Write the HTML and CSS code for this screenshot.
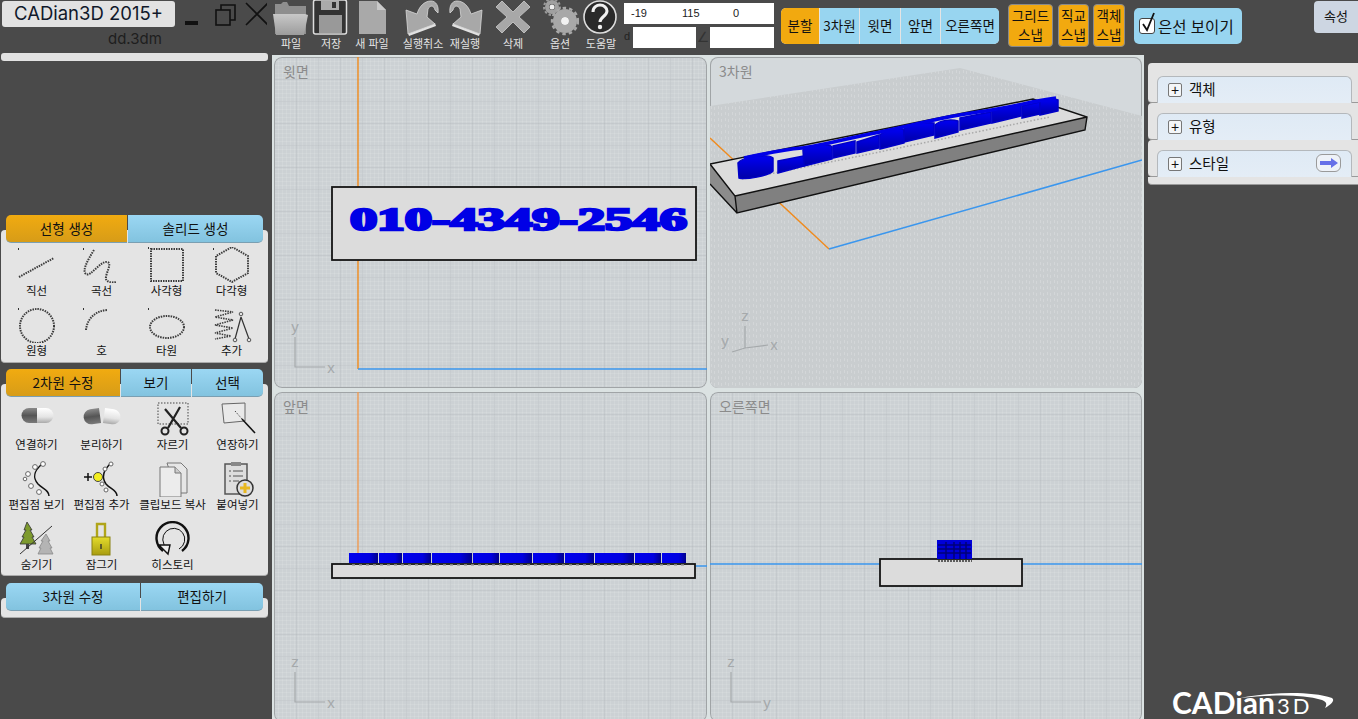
FILE: index.html
```html
<!DOCTYPE html>
<html lang="ko">
<head>
<meta charset="utf-8">
<title>CADian3D 2015+</title>
<link rel="stylesheet" href="styles.css">
</head>
<body>
<svg class="defs" width="0" height="0" aria-hidden="true">
  <defs>
    <linearGradient id="gPage" x1="0" y1="0" x2="0" y2="1"><stop offset="0" stop-color="#c8c8c8"/><stop offset="1" stop-color="#9c9c9c"/></linearGradient>
    <linearGradient id="gDark" x1="0" y1="0" x2="0" y2="1"><stop offset="0" stop-color="#8a8a8a"/><stop offset=".5" stop-color="#555"/><stop offset="1" stop-color="#7a7a7a"/></linearGradient>
    <linearGradient id="gLight" x1="0" y1="0" x2="0" y2="1"><stop offset="0" stop-color="#fff"/><stop offset=".6" stop-color="#e4e4e4"/><stop offset="1" stop-color="#aaa"/></linearGradient>
    <linearGradient id="gLock" x1="0" y1="0" x2="0" y2="1"><stop offset="0" stop-color="#e4dc2c"/><stop offset="1" stop-color="#a89c10"/></linearGradient>
    <linearGradient id="gBlue" x1="0" y1="0" x2="1" y2="0"><stop offset="0" stop-color="#0000ee"/><stop offset=".7" stop-color="#0000e0"/><stop offset="1" stop-color="#00008c"/></linearGradient>
    <linearGradient id="gWall" x1="0" y1="0" x2="0" y2="1"><stop offset="0" stop-color="#0000f4"/><stop offset=".45" stop-color="#0000d0"/><stop offset="1" stop-color="#0000a8"/></linearGradient>
    <pattern id="pFloor" width="7" height="6" patternUnits="userSpaceOnUse"><rect width="7" height="6" fill="#c9cdcf"/><rect x="1" y="1" width="1" height="3" fill="#d3d6d8"/><rect x="4" y="2" width="1" height="3" fill="#d3d6d8"/></pattern>
  </defs>
</svg>
<div class="app">
  <aside class="left">
    <div class="titlerow">
      <div class="appname">CADian3D 2015+</div>
      <svg class="winctl" width="90" height="26" viewBox="0 0 90 26">
        <rect x="8" y="20" width="13" height="4" fill="#111"/>
        <rect x="39" y="9" width="14" height="15" fill="none" stroke="#111" stroke-width="1.6"/>
        <path d="M44 9V4h14v15h-5" fill="none" stroke="#111" stroke-width="1.6"/>
        <path d="M69 2l22 22M91 2L69 24" stroke="#111" stroke-width="1.6"/>
      </svg>
    </div>
    <div class="filename">dd.3dm</div>
    <div class="progress"></div>

    <section class="group first">
      <div class="tabs">
        <div class="tab on t-a1">선형 생성</div>
        <div class="tab t-a2">솔리드 생성</div>
      </div>
      <div class="panel p1">
        <div class="cmds">
          <div class="cmd"><svg width="40" height="36" viewBox="0 0 40 36"><g class="dots"><path d="M2 30L37 11"/></g><rect class="tick" x="1" y="1" width="1" height="2"/></svg><span>직선</span></div>
          <div class="cmd"><svg width="40" height="36" viewBox="0 0 40 36"><g class="dots"><path d="M12 3C5 14 0 24 4 27c5 3 14-13 21-12 6 1-2 12-1 17 1 3 5 4 11 3"/></g><rect class="tick" x="1" y="1" width="1" height="2"/></svg><span>곡선</span></div>
          <div class="cmd"><svg width="40" height="36" viewBox="0 0 40 36"><g class="dots"><path d="M4 2h32v32H4z"/></g><rect class="tick" x="1" y="0" width="1" height="2"/></svg><span>사각형</span></div>
          <div class="cmd"><svg width="40" height="36" viewBox="0 0 40 36"><g class="dots"><path d="M20 0l16 9v17l-16 9-16-9V9z"/></g><rect class="tick" x="1" y="1" width="1" height="2"/></svg><span>다각형</span></div>
          <div class="cmd"><svg width="40" height="36" viewBox="0 0 40 36"><g class="dots"><circle cx="20" cy="19" r="17"/></g><rect class="tick" x="1" y="1" width="1" height="2"/></svg><span>원형</span></div>
          <div class="cmd"><svg width="40" height="36" viewBox="0 0 40 36"><g class="dots"><path d="M4 23C5 12 13 4 25 3"/></g><rect class="tick" x="1" y="1" width="1" height="2"/></svg><span>호</span></div>
          <div class="cmd"><svg width="40" height="36" viewBox="0 0 40 36"><g class="dots"><ellipse cx="20" cy="20" rx="17" ry="11"/></g><rect class="tick" x="1" y="1" width="1" height="2"/></svg><span>타원</span></div>
          <div class="cmd"><svg width="40" height="36" viewBox="0 0 40 36"><g class="dots thin"><path d="M3 3l18 2-18 5 18 3-18 5 18 3-18 5 16 3-16 3"/></g><path d="M29 10l-6 22M29 10l8 22" fill="none" stroke="#333" stroke-width="1.2"/><circle cx="29" cy="7" r="1.8" fill="#e4e4e4" stroke="#555"/><circle cx="23" cy="33" r="1.8" fill="#e4e4e4" stroke="#555"/><circle cx="37" cy="33" r="1.8" fill="#e4e4e4" stroke="#555"/></svg><span>추가</span></div>
        </div>
      </div>
    </section>

    <section class="group">
      <div class="tabs">
        <div class="tab on t-b1">2차원 수정</div>
        <div class="tab t-b2">보기</div>
        <div class="tab t-b3">선택</div>
      </div>
      <div class="panel p2">
        <div class="cmds cmds2">
          <div class="cmd"><svg width="40" height="36" viewBox="0 0 40 36"><path d="M12 7h8v15h-8a7.500 7.500 0 0 1 0-15z" fill="url(#gDark)"/><path d="M20 7h9a7.500 7.500 0 0 1 0 15h-9z" fill="url(#gLight)"/></svg><span>연결하기</span></div>
          <div class="cmd"><svg width="42" height="36" viewBox="0 0 42 36"><g transform="rotate(-8 12 15)"><path d="M10 8h9v15h-9a7.500 7.500 0 0 1 0-15z" fill="url(#gDark)"/></g><g transform="rotate(8 30 15)"><path d="M23 8h9a7.500 7.500 0 0 1 0 15h-9z" fill="url(#gLight)"/></g></svg><span>분리하기</span></div>
          <div class="cmd"><svg width="40" height="36" viewBox="0 0 40 36"><rect x="5" y="2" width="30" height="21" fill="none" stroke="#444" stroke-dasharray="1.500 1.500"/><path d="M12 8l16 19M27 6L15 27" stroke="#222" stroke-width="2.200"/><circle cx="12" cy="30" r="3.500" fill="none" stroke="#222" stroke-width="2"/><circle cx="31" cy="30" r="3.500" fill="none" stroke="#222" stroke-width="2"/></svg><span>자르기</span></div>
          <div class="cmd"><svg width="40" height="36" viewBox="0 0 40 36"><path d="M4 3l23-1v18L6 22z" fill="#e9e9e9" stroke="#666"/><path d="M17 10l7 8" stroke="#444" stroke-dasharray="1.500 1.500"/><path d="M24 18l13 14" stroke="#111" stroke-width="1.600"/></svg><span>연장하기</span></div>
          <div class="cmd"><svg width="40" height="36" viewBox="0 0 40 36"><path d="M25 3c-8 7-10 13-4 20 5 5 11 6 11 12" fill="none" stroke="#111" stroke-width="1.500"/><g fill="#fff" stroke="#666"><circle cx="26" cy="3" r="2.400"/><circle cx="18" cy="6" r="2.400"/><circle cx="11" cy="13" r="2.400"/><circle cx="8" cy="18" r="1.800"/><circle cx="14" cy="25" r="2.400"/><circle cx="22" cy="31" r="2.400"/></g></svg><span>편집점 보기</span></div>
          <div class="cmd"><svg width="40" height="36" viewBox="0 0 40 36"><path d="M28 3c-6 6-9 13-4 20 4 5 11 6 11 12" fill="none" stroke="#111" stroke-width="1.500"/><g fill="#fff" stroke="#666"><circle cx="29" cy="3" r="2"/><circle cx="23" cy="8" r="2"/><circle cx="20" cy="23" r="2"/><circle cx="24" cy="29" r="2"/></g><circle cx="16" cy="16" r="4.500" fill="#f3ee20" stroke="#444"/><path d="M2 16h8M6 12v8" stroke="#111" stroke-width="1.500"/></svg><span>편집점 추가</span></div>
          <div class="cmd"><svg width="40" height="36" viewBox="0 0 40 36"><path d="M14 2h14l6 6v24H24z" fill="#e6e6e6" stroke="#777"/><path d="M7 6h15l6 6v24H7z" fill="#ececec" stroke="#777"/><path d="M22 6v6h6" fill="#ccc" stroke="#777"/></svg><span>클립보드 복사</span></div>
          <div class="cmd"><svg width="40" height="36" viewBox="0 0 40 36"><rect x="7" y="3" width="22" height="30" fill="#ddd" stroke="#555" stroke-width="1.500"/><rect x="13" y="1" width="10" height="4" fill="#888"/><path d="M11 10h2M15 10h10M11 15h2M15 15h10M11 20h2M15 20h6" stroke="#555"/><circle cx="27" cy="27" r="8" fill="#ddd" stroke="#333" stroke-width="1.500"/><path d="M27 22v10M22 27h10" stroke="#e8b820" stroke-width="3"/></svg><span>붙여넣기</span></div>
          <div class="cmd"><svg width="40" height="36" viewBox="0 0 40 36"><path d="M10 1l5 8h-2l4 7h-2l4 7H3l4-7H5l4-7H7z" fill="#7d9a2e" stroke="#333" stroke-width=".8"/><rect x="9" y="23" width="3" height="5" fill="#444"/><path d="M29 13l4 7h-2l4 7h-2l3 6H21l3-6h-2l4-7h-2z" fill="#b4b4b4" stroke="#888" stroke-width=".8"/><path d="M3 33L35 5" stroke="#333"/></svg><span>숨기기</span></div>
          <div class="cmd"><svg width="40" height="36" viewBox="0 0 40 36"><path d="M15 17V3h8v14" fill="none" stroke="#b0a51a" stroke-width="2.400"/><rect x="10" y="16" width="18" height="18" fill="url(#gLock)" stroke="#8a8212"/><path d="M19 23v5" stroke="#333" stroke-width="1.400"/></svg><span>잠그기</span></div>
          <div class="cmd"><svg width="40" height="36" viewBox="0 0 40 36"><path d="M10 30A16 16 0 1 1 29 30" fill="none" stroke="#111" stroke-width="2.400"/><path d="M14 27a11 11 0 1 1 12 1" fill="none" stroke="#111" stroke-width="1"/><path d="M6 24l11 0-2 9z" fill="#eee" stroke="#111" stroke-width="1.400"/></svg><span>히스토리</span></div>
        </div>
      </div>
    </section>

    <section class="group">
      <div class="tabs">
        <div class="tab t-c1">3차원 수정</div>
        <div class="tab t-c2">편집하기</div>
      </div>
      <div class="panel p3"></div>
    </section>
  </aside>

  <div class="right">
    <header class="toolbar">
      <div class="tools">
        <div class="tool"><svg width="38" height="36" viewBox="0 0 38 36"><path d="M3 4h6l2-2h4l2 4h17v28H3z" fill="#8e8e8e"/><path d="M1 14h32l3 1-4 20H4z" fill="url(#gPage)"/></svg><span>파일</span></div>
        <div class="tool"><svg width="38" height="36" viewBox="0 0 38 36"><rect x="1.500" y="0" width="33" height="34" rx="2" fill="#333" stroke="#ddd" stroke-width="1.500"/><rect x="9" y="1" width="18" height="9" fill="#aaa"/><rect x="20" y="2" width="4" height="6" fill="#333"/><rect x="7" y="15" width="23" height="18" fill="#999"/></svg><span>저장</span></div>
        <div class="tool"><svg width="38" height="36" viewBox="0 0 38 36"><path d="M6 1h18l9 9v24H6z" fill="#a9a9a9"/><path d="M24 1v9h9z" fill="#c9c9c9"/></svg><span>새 파일</span></div>
        <div class="tool"><svg width="38" height="36" viewBox="0 0 38 36"><path d="M4 33l27-10 1 3-27 10z" fill="#e2e2e2"/><path d="M2 10l11 4C15 7 20 1 27 1c5 0 8 5 7 12l-3-3c-1-5-5-5-7-1l-1 8 8 7L4 34z" fill="#a8a8a8" stroke="#d8d8d8" stroke-width=".8"/></svg><span>실행취소</span></div>
        <div class="tool"><svg width="38" height="36" viewBox="0 0 38 36"><g transform="matrix(-1 0 0 1 38 0)"><path d="M4 33l27-10 1 3-27 10z" fill="#e2e2e2"/><path d="M2 10l11 4C15 7 20 1 27 1c5 0 8 5 7 12l-3-3c-1-5-5-5-7-1l-1 8 8 7L4 34z" fill="#a8a8a8" stroke="#d8d8d8" stroke-width=".8"/></g></svg><span>재실행</span></div>
        <div class="tool"><svg width="38" height="36" viewBox="0 0 38 36"><path d="M8 1l11 11L30 1l6 6-11 10 11 10-6 6-11-11L8 33l-6-6 11-10L2 7z" fill="#a8a8a8" stroke="#bcbcbc"/></svg><span>삭제</span></div>
        <div class="tool"><svg width="38" height="36" viewBox="0 0 38 36"><g fill="none"><circle cx="11" cy="7" r="8" stroke="#9a9a9a" stroke-width="2" stroke-dasharray="2.500 2"/><circle cx="11" cy="7" r="5" stroke="#a0a0a0" stroke-width="4"/><circle cx="24" cy="21" r="8" stroke="#a8a8a8" stroke-width="8"/><circle cx="24" cy="21" r="13" stroke="#a8a8a8" stroke-width="2.400" stroke-dasharray="3.500 3"/></g><circle cx="11" cy="7" r="2.500" fill="#eee"/><circle cx="24" cy="21" r="4" fill="#f2f2f2"/></svg><span>옵션</span></div>
        <div class="tool"><svg width="38" height="36" viewBox="0 0 38 36"><circle cx="18" cy="17" r="16" fill="#2a2a2a" stroke="#ddd" stroke-width="1.600"/><path d="M11 12c0-5 4-7 7-7 4 0 7 3 7 6 0 5-7 6-7 11" fill="none" stroke="#f0f0f0" stroke-width="3"/><circle cx="18" cy="27" r="2.200" fill="#f0f0f0"/></svg><span>도움말</span></div>
      </div>
      <div class="coords">
        <div class="coordtop"><span>-19</span><span>115</span><span>0</span></div>
        <div class="coordbot"><span class="mark">d</span><div class="cbox c1"></div><span class="mark ang">∠</span><div class="cbox c2"></div></div>
      </div>
      <div class="seg">
        <div class="s on s1">분할</div>
        <div class="s s2">3차원</div>
        <div class="s s3">윗면</div>
        <div class="s s4">앞면</div>
        <div class="s s5">오른쪽면</div>
      </div>
      <div class="snap sn1">그리드<br>스냅</div>
      <div class="snap sn2">직교<br>스냅</div>
      <div class="snap sn3">객체<br>스냅</div>
      <div class="hidden-line"><span class="check"><svg width="14" height="22" viewBox="0 0 14 22"><path d="M2 12l4 6 7-17" fill="none" stroke="#111" stroke-width="1.800"/></svg></span>은선 보이기</div>
      <div class="props">속성</div>
    </header>

    <main class="main">
      <div class="views">
        <div class="vp">
          <div class="vp-label">윗면</div>
          <svg class="scene" viewBox="0 0 433 331">
            <path class="ax-o" d="M84 0V312"/><path class="ax-b" d="M84 312H433"/>
            <rect class="slab" x="58" y="130" width="364" height="73"/>
            <text class="phone" x="76" y="173" textLength="337" lengthAdjust="spacingAndGlyphs">010-4349-2546</text>
            <path class="axis" d="M21 280V310H51"/><text class="axl" x="21" y="275">y</text><text class="axl" x="57" y="316">x</text>
          </svg>
        </div>
        <div class="vp">
          <div class="vp-label">3차원</div>
          <svg class="scene" viewBox="0 0 432 331">
            <path d="M0 49L250 11 432 59V331H0z" fill="url(#pFloor)"/>
            <path class="ax-o" d="M0 81L119 192"/><path class="ax-b" d="M119 192L432 103"/>
            <path d="M0 107L25 139 27 156 0 127z" fill="#8c8c8c"/>
            <path d="M25 139L377 60 375 73 27 156z" fill="#808080"/>
            <path d="M0 107L323 42 377 60 25 139z" fill="#dcdcdc"/>
            <path d="M0 107L323 42 377 60 375 73 27 156 25 139 0 107M25 139L377 60M0 127L27 156" fill="none" stroke="#111" stroke-width="1.400"/>
            <path d="M32 122C110 108 250 78 340 60" fill="none" stroke="#a8a8a8" stroke-width="1.500" stroke-dasharray="1.500 2"/>
            <g class="letters">
              <path d="M28 106c4-6 30-10 35-5v13c-4 5-28 9-34 7z"/>
              <path d="M68 104l26-5v10l-26 7z"/>
              <path d="M93 93c5-5 25-7 29-3v12l-28 7z"/>
              <path d="M123 89l22-5v12l-22 5z"/>
              <path d="M147 85l22-7v13l-22 5z"/>
              <path d="M170 78c5-5 20-8 24-5v13l-24 6z"/>
              <path d="M194 72c6-5 22-7 30-6v12l-30 7z"/>
              <path d="M225 68c5-5 16-6 23-4v11l-23 6z"/>
              <path d="M250 61l31-6v11l-31 7z"/>
              <path d="M282 54l29-6v11l-29 7z"/>
              <path d="M312 49l18-4v12l-18 4z"/>
              <path d="M330 45c3-3 14-4 18-2v11l-18 4z"/>
            </g>
            <path d="M34 101C70 93 80 92 92 91S130 83 170 75 230 60 268 55 320 44 346 41" fill="none" stroke="#0000e8" stroke-width="3.500"/>
            <path class="axis" d="M35 291V269M35 291L58 288M35 291L22 295"/><text class="axl" x="35" y="264">z</text><text class="axl" x="64" y="293">x</text><text class="axl" x="15" y="289">y</text>
          </svg>
        </div>
        <div class="vp">
          <div class="vp-label">앞면</div>
          <svg class="scene" viewBox="0 0 433 330">
            <path class="ax-o soft" d="M84 0V171"/><path class="ax-b" d="M422 174H433"/>
            <rect class="slab" x="58" y="172" width="363" height="14"/>
            <path d="M78 173H410" stroke="#999" stroke-width="1.500" stroke-dasharray="3 4" fill="none"/>
            <g class="front">
              <rect x="75" y="161" width="29" height="10"/><rect x="105" y="161" width="23" height="10"/><rect x="129" y="161" width="28" height="10"/><rect x="158" y="161" width="40" height="10"/><rect x="199" y="161" width="26" height="10"/><rect x="226" y="161" width="32" height="10"/><rect x="259" y="161" width="31" height="10"/><rect x="291" y="161" width="29" height="10"/><rect x="321" y="161" width="39" height="10"/><rect x="361" y="161" width="26" height="10"/><rect x="388" y="161" width="24" height="10"/>
            </g>
            <path class="axis" d="M21 280V310H51"/><text class="axl" x="21" y="275">z</text><text class="axl" x="57" y="316">x</text>
          </svg>
        </div>
        <div class="vp">
          <div class="vp-label">오른쪽면</div>
          <svg class="scene" viewBox="0 0 432 330">
            <path class="ax-b" d="M0 172H432"/>
            <rect class="slab" x="170" y="167" width="142" height="27"/>
            <rect x="227" y="148" width="35" height="19" fill="#0000d8"/>
            <path d="M236 150v17M244 150v17M250 150v17M256 150v17M228 153h33M228 157h33M228 161h33" stroke="#000078" stroke-width="1.500" fill="none"/>
            <path d="M228 169h34" stroke="#333" stroke-width="1.500" stroke-dasharray="2 1"/>
            <path class="axis" d="M21 280V310H51"/><text class="axl" x="21" y="275">z</text><text class="axl" x="57" y="316">y</text>
          </svg>
        </div>
      </div>
      <div class="side">
        <div class="acc acc-first"><div class="acc-h"><span class="plus">+</span>객체</div></div>
        <div class="acc"><div class="acc-h"><span class="plus">+</span>유형</div></div>
        <div class="acc"><div class="acc-h"><span class="plus">+</span>스타일<span class="go"><svg width="20" height="12" viewBox="0 0 20 12"><path d="M1 4h11V1l7 5-7 5V8H1z" fill="#6670e8"/></svg></span></div></div>
        <div class="acc acc-end"></div>
        <div class="logo">
          <svg class="swoosh" width="100" height="18" viewBox="0 0 100 18"><path d="M2 6C34 0 72-1 94 6c3 2 0 6-7 10 2-4 2-6-3-8C62 2 34 3 2 6z" fill="#fff"/></svg>
          <span class="lg1">CADian</span><span class="lg2">3D</span>
        </div>
      </div>
    </main>
  </div>
</div>
</body>
</html>
```
FILE: styles.css
```css
* { box-sizing: border-box; }
html, body { margin: 0; padding: 0; height: 100%; overflow: hidden; }
body {
  background: #4a4a4a;
  font-family: "Noto Sans CJK KR", "Noto Sans", "Liberation Sans", sans-serif;
  color: #111;
}
.defs { display: block; height: 0; }
.app { display: flex; width: 1358px; height: 719px; overflow: hidden; }

/* left column */
.left { width: 272px; flex: none; }
.titlerow { display: flex; padding: 1px 0 0 2px; height: 27px; }
.appname {
  width: 173px; height: 26px; background: #e2e2e2; border-radius: 3px;
  font: 18.5px/25px "Inter", "Liberation Sans", sans-serif; text-align: center; color: #10182a;
}
.winctl { margin-left: 2px; }
.filename { height: 26px; padding: 3px 0 0 108px; font: 15px/18px "Inter", "Liberation Sans", sans-serif; color: #1e1e1e; }
.progress { height: 8px; margin-left: 1px; width: 267px; background: #e2e2e2; border-radius: 3px; }

.group { margin-top: 6px; }
.group + .group + .group { margin-top: 7px; }
.group.first { margin-top: 154px; }
.tabs { display: flex; gap: 1px; margin: 0 9px 0 6px; position: relative; z-index: 1; height: 28px; }
.tab {
  background: linear-gradient(#9bd7f3, #82c3df);
  border-bottom: 1px solid #7a9fb2;
  font-size: 13.5px; line-height: 26px; text-align: center; color: #111;
}
.tab:first-child { border-radius: 5px 0 0 5px; }
.tab:last-child { border-radius: 0 5px 5px 0; }
.tab.on { background: linear-gradient(#f1ab10, #d79c18); }
.t-a1 { width: 121px; } .t-a2 { width: 135px; }
.t-b1 { width: 114px; } .t-b2 { width: 70px; } .t-b3 { width: 71px; }
.t-c1 { width: 134px; } .t-c2 { width: 122px; }

.panel { margin: -13px 0 0 1px; width: 267px; background: #e4e4e4; border-bottom: 1px solid #aaa; border-radius: 4px; padding: 15px 0 0 3px; }
.p1 { height: 133px; } .p2 { height: 192px; } .p3 { height: 20px; padding: 0; }
.cmds { display: grid; grid-template-columns: repeat(4, 65px); grid-auto-rows: 60px; }
.cmds2 { grid-template-columns: 65px 65px 77px 53px; }
.cmd { display: flex; flex-direction: column; align-items: center; }
.cmd svg { margin-top: 2px; display: block; flex: none; }
.cmd span { font-size: 11.5px; line-height: 14px; white-space: nowrap; color: #111; }
.dots path, .dots circle, .dots ellipse {
  fill: none; stroke: #3c3c3c; stroke-width: 2; stroke-dasharray: 1.5 1;
}
.dots.thin path { stroke-width: 1.6; }
.tick { fill: #333; }

/* right side */
.right { flex: 1; min-width: 0; display: flex; flex-direction: column; }
.toolbar { height: 55px; display: flex; align-items: flex-start; flex: none; }
.tools { display: flex; margin-left: -1px; }
.tool { width: 40px; height: 55px; display: flex; flex-direction: column; align-items: center; }
.tool svg { display: block; height: 36px; flex: none; }
.tool span { font-size: 11px; line-height: 14px; color: #e4e4e4; white-space: nowrap; }
.tool:nth-child(3) { margin-left: 1px; }
.tool:nth-child(4) { margin-left: 11px; }
.tool:nth-child(5) { margin-left: 2px; }
.tool:nth-child(6) { margin-left: 8px; }
.tool:nth-child(7) { margin-left: 7px; }
.tool:nth-child(8) { margin-left: 1px; }

.coords { width: 150px; margin: 3px 0 0 3px; flex: none; }
.coordtop { height: 21px; background: #fff; display: grid; grid-template-columns: 51px 51px 48px; padding-left: 7px; font: 11px/20px "Liberation Sans", sans-serif; color: #222; }
.coordbot { display: flex; margin-top: 3px; height: 21px; }
.mark { width: 9px; font: 11px/19px "Liberation Sans", sans-serif; color: #222; }
.mark.ang { width: 14px; text-align: center; color: #333; font: 14px/21px "DejaVu Sans", sans-serif; }
.cbox { background: #fff; height: 21px; }
.c1 { width: 63px; } .c2 { width: 64px; }

.seg { display: flex; width: 218px; height: 36px; margin: 8px 0 0 7px; flex: none; border-radius: 5px; overflow: hidden; gap: 1px; background: #e4e4e4; }
.s { background: #98d5f0; font-size: 13.5px; line-height: 34px; text-align: center; color: #111; white-space: nowrap; }
.s.on { background: #f2a90f; }
.s1 { width: 38px; } .s2 { width: 39px; } .s3 { width: 40px; } .s4 { width: 39px; } .s5 { flex: 1; }
.snap { height: 43px; margin-top: 4px; background: #f2a90f; border-radius: 4px; border: 1px solid #8a8a8a; font-size: 13.5px; line-height: 19px; text-align: center; padding-top: 1px; color: #111; flex: none; }
.sn1 { width: 45px; margin-left: 9px; }
.sn2 { width: 31px; margin-left: 5px; }
.sn3 { width: 32px; margin-left: 4px; }
.hidden-line { width: 108px; height: 36px; margin: 8px 0 0 9px; background: #98d5f0; border-radius: 5px; font-size: 15.5px; line-height: 35px; display: flex; align-items: center; color: #111; white-space: nowrap; flex: none; }
.check { width: 16px; height: 16px; margin: 0 3px 0 5px; background: #fff; border: 1px solid #444; border-radius: 3px; display: block; position: relative; flex: none; }
.check svg { position: absolute; left: 1px; top: -7px; }
.props { width: 44px; height: 32px; margin: 1px 0 0 72px; background: #cdd6e2; border-radius: 4px 0 0 4px; font-size: 13px; line-height: 30px; text-align: center; color: #111; flex: none; }

.main { display: flex; flex: 1; min-height: 0; }
.views {
  width: 872px; flex: none; padding: 2px; background: #dbe2e2;
  display: grid; grid-template-columns: 433px 432px; grid-template-rows: 331px 330px; column-gap: 3px; row-gap: 4px;
  overflow: hidden;
}
.vp {
  position: relative; border-radius: 8px; overflow: hidden;
  background-color: #ccd1d4;
  background-image:
    linear-gradient(rgba(180,185,189,.35) 1px, transparent 1px),
    linear-gradient(90deg, rgba(180,185,189,.35) 1px, transparent 1px),
    linear-gradient(rgba(255,255,255,.1) 1px, transparent 1px),
    linear-gradient(90deg, rgba(255,255,255,.1) 1px, transparent 1px);
  background-size: 22px 22px, 22px 22px, 4px 4px, 4px 4px;
  box-shadow: inset 0 0 0 1px #a0a4a6;
}
.vp:nth-child(2) { background-image: none; background-color: #d4d9dc; }
.vp-label { position: relative; z-index: 1; padding: 4px 0 0 9px; font-size: 14px; line-height: 20px; color: #8b8b8b; }
.scene { position: absolute; left: 0; top: 0; width: 100%; height: 100%; display: block; }
.vp:nth-child(4) .scene, .vp:nth-child(3) .scene { height: 330px; }
.ax-o { stroke: #f08a1c; stroke-width: 1.4; fill: none; }
.ax-o.soft { stroke: #ee9a52; }
.ax-b { stroke: #3a96ee; stroke-width: 1.6; fill: none; }
.slab { fill: #dcdcdc; stroke: #151515; stroke-width: 1.8; }
.phone { font: 700 31px "Liberation Serif", serif; fill: #0000e6; stroke: #0000e6; stroke-width: 2.4; }
.axis { stroke: #a5a9ab; stroke-width: 1.2; fill: none; }
.axl { font: 15px "Liberation Sans", sans-serif; fill: #a5a9ab; text-anchor: middle; }
.letters path { fill: url(#gWall); stroke: #0000c8; stroke-width: 1.5; }
.front rect { fill: url(#gBlue); }

.side { flex: 1; padding: 8px 0 0 4px; position: relative; }
.acc { height: 37px; background: #e4e4e4; border-bottom: 1px solid #9a9a9a; border-radius: 4px 0 0 4px; padding: 10px 6px 0 9px; }
.acc-first { height: 40px; padding-top: 13px; }
.acc-end { height: 8px; padding: 0; border-radius: 0 0 0 4px; }
.acc-h { height: 27px; background: linear-gradient(#dfeaf5, #e4edf6); border: 1px solid #b4b8bc; border-bottom: 0; border-radius: 6px 6px 0 0; font-size: 14.5px; line-height: 24px; padding-left: 10px; display: flex; align-items: flex-start; color: #111; }
.plus { width: 14px; height: 14px; margin: 6px 7px 0 0; border: 1px solid #777; border-radius: 2px; background: #f4f6f8; font: 14px/12px "Liberation Sans", sans-serif; text-align: center; display: block; flex: none; }
.go { width: 25px; height: 18px; margin: 3px 10px 0 auto; border: 1px solid #9a9a9a; border-radius: 6px; background: #eef2f8; display: flex; align-items: center; justify-content: center; }
.logo { position: absolute; left: 28px; top: 632px; color: #fff; white-space: nowrap; height: 30px; line-height: 30px; }
.lg1 { font: 700 30px/30px "Lato", "Liberation Sans", sans-serif; }
.lg2 { font: 400 22px/30px "Lato", "Liberation Sans", sans-serif; letter-spacing: 3px; margin-left: 2px; }
.swoosh { position: absolute; left: 66px; top: 5px; }
```
